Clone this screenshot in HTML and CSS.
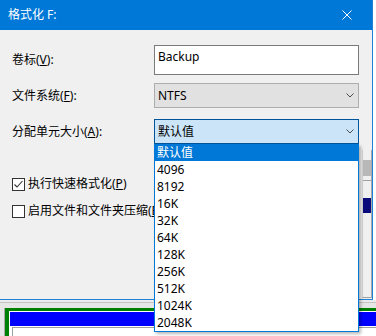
FILE: index.html
```html
<!DOCTYPE html>
<html lang="zh-CN">
<head>
<meta charset="utf-8">
<title>格式化 F:</title>
<link rel="stylesheet" href="styles.css">
</head>
<body>
<div class="screen">
  <div class="window">
    <div class="titlebar">
      <span class="title">格式化 F:</span>
      <svg class="close" width="10" height="10" viewBox="0 0 10 10"><path d="M0.5 0.5 L9.5 9.5 M9.5 0.5 L0.5 9.5" stroke="#ffffff" stroke-width="1" fill="none"/></svg>
    </div>
    <div class="client">
      <div class="row row-1">
        <span class="label">卷标(<u>V</u>):</span>
        <div class="edit">Backup</div>
      </div>
      <div class="row row-2">
        <span class="label">文件系统(<u>F</u>):</span>
        <div class="combo"><span>NTFS</span><svg class="chev" width="8" height="5" viewBox="0 0 8 5"><polyline points="0.5,0.5 4,4 7.5,0.5" fill="none" stroke="#4d4d4d" stroke-width="1"/></svg></div>
      </div>
      <div class="row row-3">
        <span class="label">分配单元大小(<u>A</u>):</span>
        <div class="combo combo-open"><span>默认值</span><svg class="chev" width="8" height="5" viewBox="0 0 8 5"><polyline points="0.5,0.5 4,4 7.5,0.5" fill="none" stroke="#4d4d4d" stroke-width="1"/></svg></div>
      </div>
      <div class="lower">
        <div class="checks">
          <div class="check"><span class="box"><svg width="11" height="11" viewBox="0 0 11 11"><polyline points="1.5,5.5 4,8 9.5,2" fill="none" stroke="#333333" stroke-width="1.1"/></svg></span><span>执行快速格式化(<u>P</u>)</span></div>
          <div class="check"><span class="box"></span><span>启用文件和文件夹压缩(<u>E</u>)</span></div>
        </div>
        <div class="strip">
          <div class="strip-block"></div>
          <div class="strip-line"></div>
          <div class="strip-navy"></div>
        </div>
      </div>
      <ul class="dropdown">
        <li class="selected">默认值</li>
        <li>4096</li>
        <li>8192</li>
        <li>16K</li>
        <li>32K</li>
        <li>64K</li>
        <li>128K</li>
        <li>256K</li>
        <li>512K</li>
        <li>1024K</li>
        <li>2048K</li>
      </ul>
    </div>
  </div>
  <div class="backdrop">
    <div class="bd-top"></div>
    <div class="bd-main">
      <div class="bd-gutter"></div>
      <div class="disk">
        <div class="disk-bar"></div>
        <div class="disk-box"></div>
      </div>
    </div>
  </div>
</div>
</body>
</html>
```
FILE: styles.css
```css
* {
  box-sizing: border-box;
  margin: 0;
  padding: 0;
}

html, body {
  width: 376px;
  height: 336px;
  overflow: hidden;
}

body {
  background: #ffffff;
  font-family: "Noto Sans", "Noto Sans CJK SC", sans-serif;
  font-size: 12px;
  line-height: 16px;
  color: #000000;
}

u {
  text-decoration: underline;
  text-underline-offset: 1px;
}

.window {
  width: 373px;
  height: 300px;
  border-right: 1px solid #1f82d8;
  border-bottom: 1px solid #1f82d8;
  position: relative;
  z-index: 2;
}

.titlebar {
  height: 30px;
  background: #0078d7;
  color: #ffffff;
  display: flex;
  align-items: center;
  justify-content: space-between;
  padding: 0 20px 0 8px;
}

.close {
  display: block;
}

.client {
  height: 269px;
  background: #f0f0f0;
  position: relative;
  padding-top: 15px;
}

.row {
  display: flex;
  align-items: center;
  padding-left: 12px;
}

.row-2 { margin-top: 8px; }
.row-3 { margin-top: 11px; }

.label {
  width: 142px;
  white-space: nowrap;
}

.edit {
  width: 205px;
  height: 30px;
  border: 1px solid #7a7a7a;
  background: #ffffff;
  padding: 3px 0 0 3px;
}

.combo {
  width: 205px;
  height: 25px;
  border: 1px solid #adadad;
  background: #e1e1e1;
  display: flex;
  align-items: center;
  justify-content: space-between;
  padding: 0 4px 0 3px;
}

.combo-open {
  background: #cce4f7;
  border-color: #005499;
}

.chev {
  display: block;
}

.lower {
  display: flex;
  margin-top: 6px;
  height: 148px;
}

.checks {
  flex: 1;
  display: flex;
  flex-direction: column;
  gap: 11px;
  padding: 26px 0 0 12px;
  min-width: 0;
}

.check {
  display: flex;
  align-items: center;
  height: 16px;
  white-space: nowrap;
}

.box {
  width: 13px;
  height: 13px;
  border: 1px solid #333333;
  background: #ffffff;
  margin-right: 3px;
  flex: none;
}

.box svg {
  display: block;
}

.strip {
  width: 10px;
  flex: none;
  border-left: 1px solid #d6d6d6;
  border-right: 1px solid #a9a9a9;
  border-bottom: 1px solid #a0a0a0;
}

.strip-block {
  margin-top: 10px;
  height: 16px;
  background: #b8b8b8;
}

.strip-line {
  margin-top: 4px;
  height: 1px;
  background: #a0a0a0;
}

.strip-navy {
  margin-top: 17px;
  height: 15px;
  background: #0a0a7a;
}

.dropdown {
  position: absolute;
  left: 154px;
  top: 114px;
  width: 205px;
  list-style: none;
  background: #ffffff;
  border: 1px solid #0078d7;
  border-top: none;
  box-shadow: 2px 2px 3px rgba(0, 0, 0, 0.28);
  z-index: 10;
}

.dropdown li {
  height: 17px;
  line-height: 17px;
  padding-left: 2px;
  white-space: nowrap;
}

.dropdown li.selected {
  background: #0078d7;
  color: #ffffff;
}

.backdrop {
  height: 36px;
  position: relative;
  z-index: 1;
}

.bd-top {
  height: 8px;
  background: linear-gradient(to bottom, #ececec 0 2px, #c4c4c4 2px 3px, #e6e6e6 3px);
}

.bd-main {
  display: flex;
  height: 28px;
}

.bd-gutter {
  width: 5px;
  background: #e6e6e6;
  border-right: 1px solid #a8a8a8;
}

.disk {
  flex: 1;
  border-top: 3px solid #008000;
  border-left: 4px solid #008000;
  background: #ffffff;
  padding: 1px 0 0 1px;
}

.disk-bar {
  height: 14px;
  background: #0000ff;
}

.disk-box {
  margin: 1px 0 0 2px;
  height: 10px;
  border: 1px solid #a0a0a0;
  border-right: none;
  border-bottom: none;
  background: #ffffff;
}
```
